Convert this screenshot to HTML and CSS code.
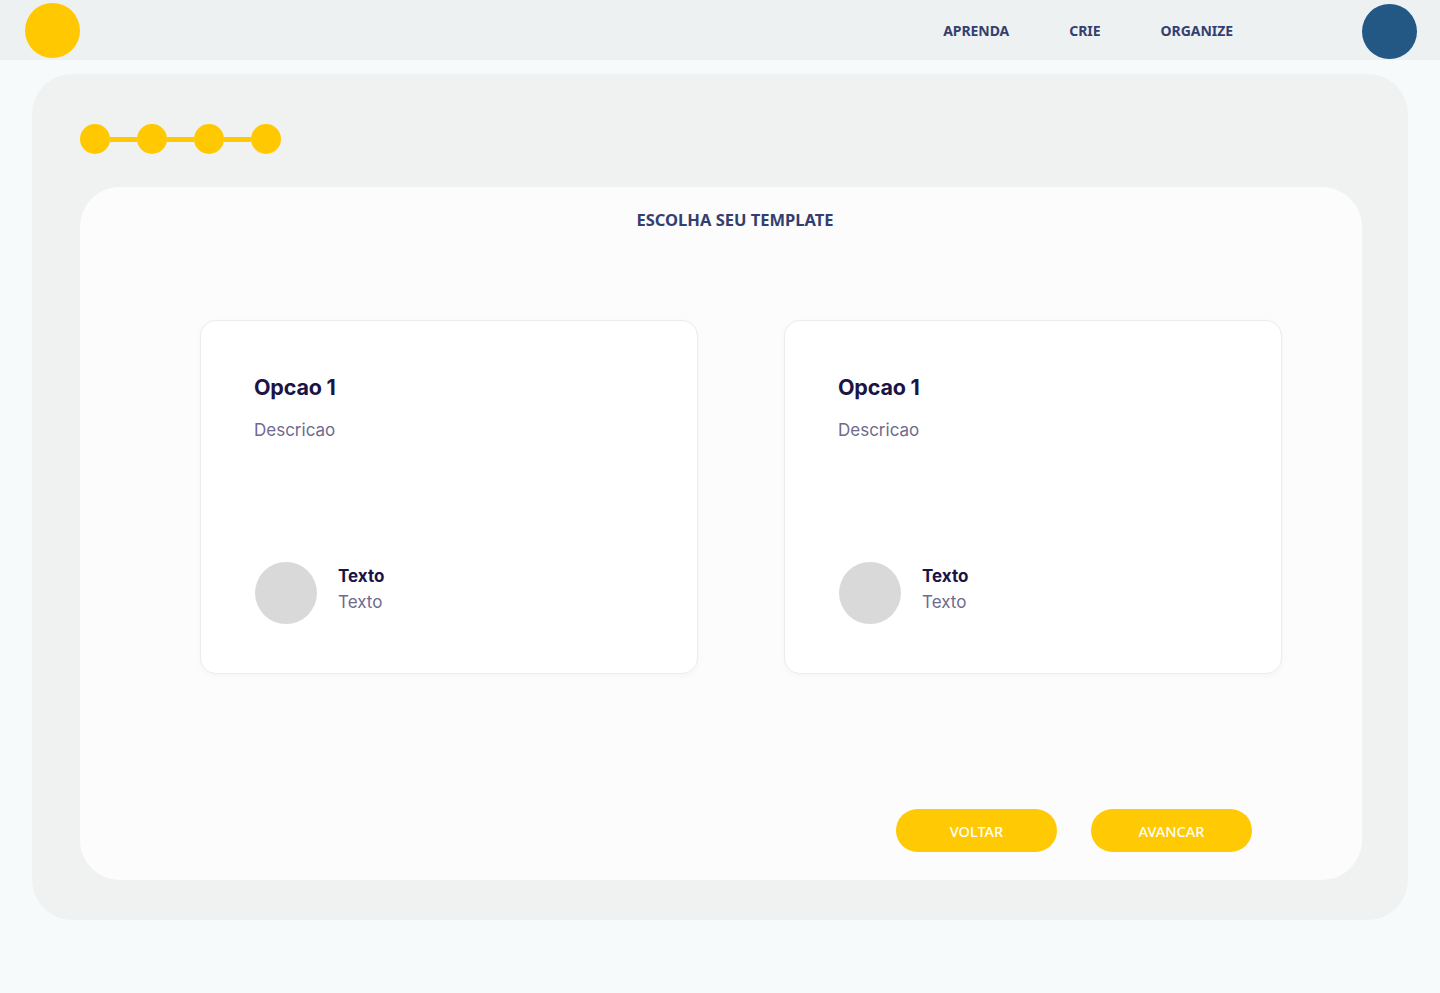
FILE: index.html
```html
<!DOCTYPE html>
<html lang="pt">
<head>
<meta charset="utf-8">
<title>Escolha seu template</title>
<link rel="stylesheet" href="styles.css">
</head>
<body>
<header class="topbar">
  <div class="logo"></div>
  <nav class="nav">
    <a href="#">APRENDA</a>
    <a href="#">CRIE</a>
    <a href="#">ORGANIZE</a>
  </nav>
  <div class="avatar-top"></div>
</header>
<main class="panel">
  <div class="stepper">
    <span class="dot"></span><span class="bar"></span>
    <span class="dot"></span><span class="bar"></span>
    <span class="dot"></span><span class="bar"></span>
    <span class="dot"></span>
  </div>
  <section class="sheet">
    <h1 class="sheet-title">ESCOLHA SEU TEMPLATE</h1>
    <div class="options">
      <article class="option">
        <h2 class="option-title">Opcao 1</h2>
        <p class="option-desc">Descricao</p>
        <div class="author">
          <div class="author-pic"></div>
          <div class="author-text">
            <div class="author-name">Texto</div>
            <div class="author-sub">Texto</div>
          </div>
        </div>
      </article>
      <article class="option">
        <h2 class="option-title">Opcao 1</h2>
        <p class="option-desc">Descricao</p>
        <div class="author">
          <div class="author-pic"></div>
          <div class="author-text">
            <div class="author-name">Texto</div>
            <div class="author-sub">Texto</div>
          </div>
        </div>
      </article>
    </div>
    <div class="actions">
      <button class="btn">VOLTAR</button>
      <button class="btn">AVANCAR</button>
    </div>
  </section>
</main>
</body>
</html>
```
FILE: styles.css
```css
* { box-sizing: border-box; }
html, body { margin: 0; padding: 0; }
body {
  background: #f7fafb;
  font-family: "Noto Sans", "Open Sans", sans-serif;
  width: 1440px;
  height: 993px;
  overflow: hidden;
}
.topbar {
  height: 60px;
  background: #eef1f2;
  display: flex;
  align-items: center;
  padding: 0 23px 0 25px;
}
.logo {
  width: 55px; height: 55px;
  border-radius: 50%;
  background: #ffc800;
}
.nav {
  margin-left: auto;
  display: flex;
  gap: 60px;
  margin-right: 129px;
}
.nav a {
  color: #33406f;
  font-weight: 700;
  font-size: 14px;
  text-decoration: none;
  letter-spacing: -0.05px;
}
.avatar-top {
  width: 55px; height: 55px;
  border-radius: 50%;
  background: #235784;
  margin-top: 2px;
}
.panel {
  margin: 14px 0 0 32px;
  width: 1376px;
  height: 846px;
  background: #f0f2f2;
  border-radius: 40px;
  padding: 50px 46px 40px 48px;
  display: flex;
  flex-direction: column;
}
.stepper {
  display: flex;
  align-items: center;
  height: 30px;
}
.dot {
  width: 30px; height: 30px;
  border-radius: 50%;
  background: #ffc800;
  flex: none;
}
.bar {
  width: 27px; height: 5px;
  background: #ffc800;
  flex: none;
}
.sheet {
  margin-top: 33px;
  flex: 1;
  background: #fcfcfc;
  border-radius: 40px;
  display: flex;
  flex-direction: column;
  padding: 22px 80px 28px 120px;
}
.sheet-title {
  margin: 0 0 0 -12px;
  text-align: center;
  font-size: 16.5px;
  font-weight: 700;
  color: #33406f;
  line-height: 22px;
}
.options {
  margin-top: 89px;
  display: grid;
  grid-template-columns: 498px 498px;
  gap: 86px;
}
.option {
  height: 354px;
  background: #ffffff;
  border: 1px solid #ececec;
  border-radius: 16px;
  box-shadow: 0 2px 6px rgba(0,0,0,0.03);
  padding: 52px 53px 0 53px;
  font-family: "Inter", "Lato", sans-serif;
}
.option-title {
  margin: 0;
  font-size: 21.5px;
  font-weight: 700;
  color: #1b1445;
  line-height: 28px;
  letter-spacing: -0.2px;
}
.option-desc {
  margin: 18px 0 0 0;
  font-size: 17px;
  color: #6e6a8e;
  line-height: 22px;
}
.author {
  margin-top: 121px;
  display: flex;
  align-items: flex-start;
  gap: 21px;
}
.author-pic {
  width: 62px; height: 62px;
  border-radius: 50%;
  background: #d9d9d9;
  margin-left: 1px;
}
.author-text { padding-top: 3px; }
.author-name {
  font-size: 17px;
  font-weight: 700;
  color: #1b1445;
  line-height: 22px;
}
.author-sub {
  margin-top: 4px;
  font-size: 17px;
  color: #6e6a8e;
  line-height: 22px;
}
.actions {
  margin-top: auto;
  display: flex;
  justify-content: flex-end;
  gap: 34px;
  padding-right: 30px;
}
.btn {
  width: 161px;
  height: 43px;
  border: 0;
  border-radius: 22px;
  background: #ffc903;
  color: #ffffff;
  font-family: "Noto Sans", "Open Sans", sans-serif;
  font-size: 14.5px;
  font-weight: 500;
  padding-top: 2px;
}
```
